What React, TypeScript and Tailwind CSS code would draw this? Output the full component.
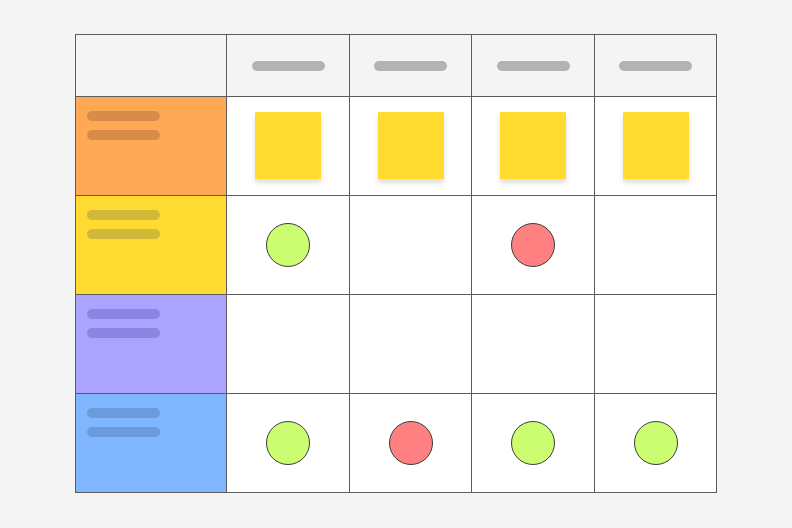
const rows = [
  { bg: "bg-[#ffa855]", bar: "bg-[#d98c4a]", cells: ["note", "note", "note", "note"] },
  { bg: "bg-[#ffda30]", bar: "bg-[#d2b838]", cells: ["green", "", "red", ""] },
  { bg: "bg-[#aba4ff]", bar: "bg-[#8b84e2]", cells: ["", "", "", ""] },
  { bg: "bg-[#80b6ff]", bar: "bg-[#6c9bdc]", cells: ["green", "red", "green", "green"] },
];

function Cell({ kind }: { kind: string }) {
  return (
    <div className="flex items-center justify-center border-r border-b border-[#5c5c5c] bg-white">
      {kind === "note" && (
        <div className="w-[66px] h-[67px] -mt-[2px] bg-[#ffdb2f] shadow-[0_4px_5px_rgba(0,0,0,0.13)]" />
      )}
      {kind === "green" && (
        <div className="w-[44px] h-[44px] rounded-full bg-[#ccfd71] border border-[#3c3c3c]" />
      )}
      {kind === "red" && (
        <div className="w-[44px] h-[44px] rounded-full bg-[#ff8080] border border-[#3c3c3c]" />
      )}
    </div>
  );
}

export default function App() {
  return (
    <div className="h-screen w-full bg-[#f4f4f4] flex justify-center pt-[34px]">
      <div className="grid h-fit grid-cols-[151px_123px_122px_123px_122px] grid-rows-[62px_99px_99px_99px_99px] border-l border-t border-[#5c5c5c]">
        {/* header row */}
        <div className="border-r border-b border-[#5c5c5c] bg-[#f4f4f4]" />
        {[0, 1, 2, 3].map((i) => (
          <div key={i} className="flex items-center justify-center border-r border-b border-[#5c5c5c] bg-[#f4f4f4]">
            <div className="w-[73px] h-[10px] rounded-full bg-[#b3b3b3]" />
          </div>
        ))}

        {rows.map((row, r) => (
          <div key={r} className="contents">
            <div className={`border-r border-b border-[#5c5c5c] ${row.bg} pl-[11px] pt-[14px] flex flex-col gap-[9px]`}>
              <div className={`w-[73px] h-[10px] rounded-full ${row.bar}`} />
              <div className={`w-[73px] h-[10px] rounded-full ${row.bar}`} />
            </div>
            {row.cells.map((c, i) => (
              <Cell key={i} kind={c} />
            ))}
          </div>
        ))}
      </div>
    </div>
  );
}
